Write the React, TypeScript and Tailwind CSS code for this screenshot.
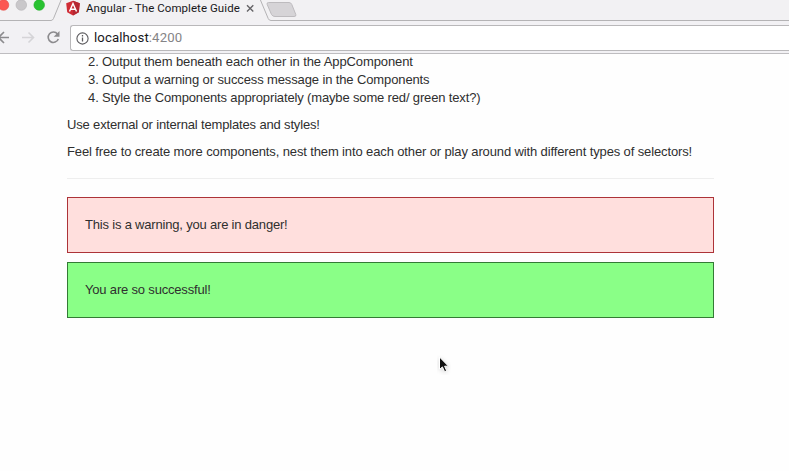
import React from "react";

const steps = [
  { n: "2.", text: "Output them beneath each other in the AppComponent", tracking: "tracking-[-0.1px]" },
  { n: "3.", text: "Output a warning or success message in the Components", tracking: "tracking-[-0.12px]" },
  { n: "4.", text: "Style the Components appropriately (maybe some red/ green text?)", tracking: "tracking-[-0.15px]" },
];

function TabStrip() {
  return (
    <div className="relative h-[21px] w-full overflow-hidden bg-[#f2f1f3]">
      <svg className="absolute inset-0" width="789" height="21" fill="none">
        <path d="M61.5 -1 L53.5 18.5 Q52.6 20.5 51 20.5 H0" stroke="#b4b3b5" />
        <path d="M260 -1 L268.2 18.5 Q269 20.5 271 20.5 H789" stroke="#b4b3b5" />
        <path d="M268.5 2.5 H289 Q291 2.5 291.8 4.5 L295.8 14.5 Q296.5 16.5 294 16.5 H275 Q272.5 16.5 271.5 14.5 L267.2 4.5 Q266.5 2.5 268.5 2.5Z" fill="#d6d4d7" stroke="#bdbbbe" />
        <circle cx="3.5" cy="5" r="5.3" fill="#fc5753" stroke="#e4504b" strokeWidth=".6" />
        <circle cx="21.3" cy="5" r="5.3" fill="#c9c7ca" stroke="#b6b4b7" strokeWidth=".6" />
        <circle cx="39.2" cy="5" r="5.3" fill="#29c231" stroke="#24b02b" strokeWidth=".6" />
        <path d="M73 .8 L79.8 3.2 L78.8 12.2 L73 15.5 L67.2 12.2 L66.2 3.2Z" fill="#d02c35" />
        <path d="M73 .8 L79.8 3.2 L78.8 12.2 L73 15.5Z" fill="#b52732" />
        <path d="M69.5 11.5 L73 3.5 L76.5 11.5 M70.8 9.2 H75.2" stroke="#fff" strokeWidth="1.4" />
        <path d="M247 5.3 L253.3 11.6 M253.3 5.3 L247 11.6" stroke="#646366" strokeWidth="1.35" />
      </svg>
      <div className="absolute left-[86px] top-[-1px] whitespace-nowrap text-[11.5px] leading-[18px] tracking-[0.06px] text-[#19181b]">
        Angular - The Complete Guide
      </div>
    </div>
  );
}

function Toolbar() {
  return (
    <div className="flex h-[33px] items-start border-b border-[#bebdc0] bg-[#f2f1f4] pt-1">
      <svg className="h-[26px] w-[70px] shrink-0" viewBox="0 0 70 26" fill="none">
        <path d="M9 12.5 H-1 M4 7 L-1.5 12.5 L4 18" stroke="#8c8b8e" strokeWidth="1.6" />
        <path d="M22 12.5 H33 M28.5 7.5 L33.5 12.5 L28.5 17.5" stroke="#d5d4d7" strokeWidth="1.6" />
        <path d="M57.5 9 A5.2 5.2 0 1 0 58.3 14" stroke="#8c8b8e" strokeWidth="1.6" />
        <path d="M59.5 6 V11.8 H53.7Z" fill="#8c8b8e" />
      </svg>
      <div className="flex h-[26px] flex-1 items-center rounded-l-[3px] border border-r-0 border-[#b9b8ba] bg-white pl-[5px]">
        <svg width="13" height="13" viewBox="0 0 13 13" fill="none" className="mr-[5px] shrink-0">
          <circle cx="6.5" cy="6.5" r="5.6" stroke="#5d5c5f" strokeWidth="1.1" />
          <path d="M6.5 5.6 V9.6 M6.5 3.1 V4.4" stroke="#5d5c5f" strokeWidth="1.3" />
        </svg>
        <span className="text-[13.2px] leading-[18px] tracking-[0.1px] text-[#19181b]">
          localhost<span className="text-[#858487]">:4200</span>
        </span>
      </div>
    </div>
  );
}

export default function App() {
  return (
    <div className="relative h-[471px] w-[789px] overflow-hidden bg-[#fefefe] font-['Liberation_Sans',Arial,sans-serif] text-[13px] leading-[18px] text-[#2f2f2f]">
      <header className="font-[Roboto,'Liberation_Sans',sans-serif]">
        <TabStrip />
        <Toolbar />
      </header>
      <main className="ml-[67px] w-[647px] whitespace-nowrap">
        <ol className="-mt-px">
          {steps.map((s) => (
            <li key={s.n} className="flex h-[18px] pl-[21px]">
              <span className="w-[14px]">{s.n}</span>
              <span className={s.tracking}>{s.text}</span>
            </li>
          ))}
        </ol>
        <p className="mt-[9px] tracking-[-0.16px]">Use external or internal templates and styles!</p>
        <p className="mt-[9px] tracking-[-0.127px]">Feel free to create more components, nest them into each other or play around with different types of selectors!</p>
        <hr className="mt-[17px] border-[#eeeeee]" />
        <div className="mt-[18px] flex h-14 items-center border border-[#ad3338] bg-[#ffdfdd] pl-[17px] tracking-[-0.19px]">
          This is a warning, you are in danger!
        </div>
        <div className="mt-[9px] flex h-14 items-center border border-[#337b35] bg-[#8aff87] pl-[17px] tracking-[-0.18px]">
          You are so successful!
        </div>
      </main>
      <svg className="absolute left-[437px] top-[355px]" width="14" height="20" viewBox="0 0 14 20">
        <path d="M2.5 2 V14.5 L5.4 11.9 L7.6 16.7 L9.7 15.8 L7.6 11.2 H11.5Z" fill="#111" stroke="#fff" strokeWidth="1" className="drop-shadow-sm" />
      </svg>
    </div>
  );
}
